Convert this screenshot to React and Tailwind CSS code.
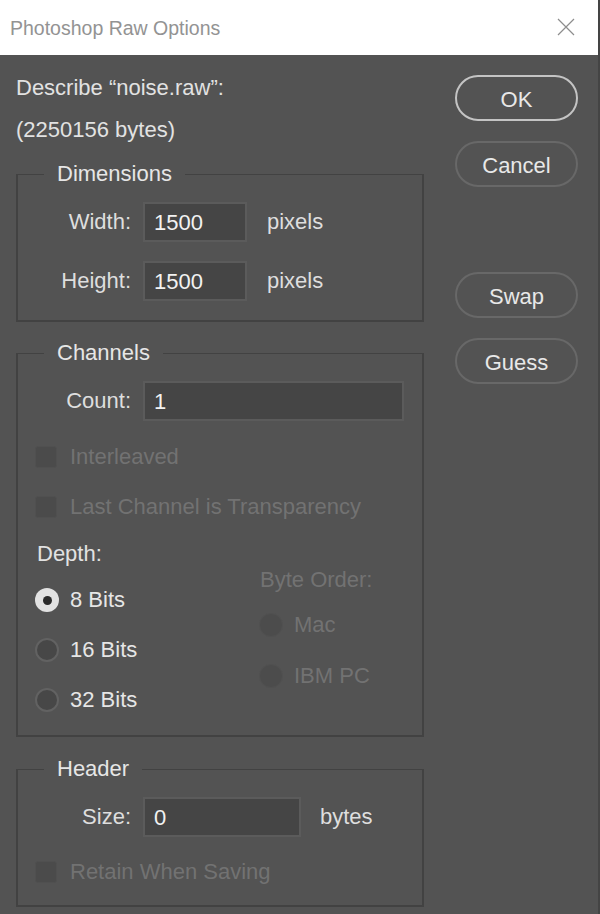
import React from "react";

const font = { fontFamily: '"Liberation Sans", Arial, sans-serif' };

const Field = ({ label, value, labelW, inputW }) => (
  <div className="flex items-center h-[40px]">
    <span className={`${labelW} text-right text-[#dedede]`}>{label}</span>
    <div
      className={`${inputW} ml-[12px] h-[40px] bg-[#454545] border-2 border-[#5b5b5b] flex items-center pl-[9px] pt-[1px] text-[#f2f2f2]`}
    >
      {value}
    </div>
  </div>
);

const Check = ({ label }) => (
  <div className="flex items-center h-[30px]">
    <div className="w-[22px] h-[22px] rounded-[3px] bg-[#4b4b4b] border border-[#505050]" />
    <span className="ml-[13px] text-[#727272]">{label}</span>
  </div>
);

const Radio = ({ label, checked, disabled }) => (
  <div className="flex items-center h-[30px]">
    {checked ? (
      <div className="w-[24px] h-[24px] rounded-full bg-[#e2e2e2] flex items-center justify-center">
        <div className="w-[9px] h-[9px] rounded-full bg-[#2b2b2b]" />
      </div>
    ) : disabled ? (
      <div className="w-[24px] h-[24px] rounded-full bg-[#4c4c4c] border border-[#515151]" />
    ) : (
      <div className="w-[24px] h-[24px] rounded-full bg-[#474747] border-2 border-[#626262]" />
    )}
    <span className={`ml-[11px] ${disabled ? "text-[#727272]" : "text-[#e6e6e6]"}`}>{label}</span>
  </div>
);

const Group = ({ title, children, className }) => (
  <div className={`relative border-2 border-t border-[#424242] ${className}`}>
    <span className="absolute -top-[15px] left-[26px] px-[13px] bg-[#535353] leading-[28px] text-[#e6e6e6]">
      {title}
    </span>
    {children}
  </div>
);

const Button = ({ children, primary, className = "" }) => (
  <div
    className={`w-[123px] h-[46px] rounded-full flex items-center justify-center pt-[3px] text-[#e8e8e8] ${
      primary ? "border-2 border-[#c4c4c4]" : "border-2 border-[#686868]"
    } ${className}`}
  >
    {children}
  </div>
);

export default function App() {
  return (
    <div
      style={font}
      className="w-[600px] h-[914px] bg-[#535353] border-r-2 border-[#444444] overflow-hidden flex flex-col text-[22px] leading-[28px]"
    >
      {/* Title bar */}
      <div className="h-[55px] bg-white flex items-center justify-between pl-[10px] pr-[23px] shrink-0">
        <span className="text-[19.5px] text-[#939393]">Photoshop Raw Options</span>
        <svg width="18" height="18" viewBox="0 0 18 18" className="-mt-[2px]">
          <path d="M1 1 L17 17 M17 1 L1 17" stroke="#8d8d8d" strokeWidth="1.2" fill="none" />
        </svg>
      </div>

      <div className="flex">
        {/* Left column */}
        <div className="w-[424px] pl-[16px] flex flex-col">
          <div className="mt-[19px] text-[#e2e2e2]">Describe “noise.raw”:</div>
          <div className="mt-[14px] text-[#e2e2e2]">(2250156 bytes)</div>

          <Group title="Dimensions" className="mt-[30px] pt-[27px] pb-[19px]">
            <div className="flex items-center">
              <Field label="Width:" value="1500" labelW="w-[113px]" inputW="w-[104px]" />
              <span className="ml-[20px] text-[#dedede]">pixels</span>
            </div>
            <div className="flex items-center mt-[19px]">
              <Field label="Height:" value="1500" labelW="w-[113px]" inputW="w-[104px]" />
              <span className="ml-[20px] text-[#dedede]">pixels</span>
            </div>
          </Group>

          <Group title="Channels" className="mt-[31px] pt-[27px] pb-[20px]">
            <Field label="Count:" value="1" labelW="w-[113px]" inputW="w-[261px]" />
            <div className="pl-[17px]">
              <div className="mt-[21px]">
                <Check label="Interleaved" />
              </div>
              <div className="mt-[20px]">
                <Check label="Last Channel is Transparency" />
              </div>
              <div className="flex mt-[18px]">
                <div className="w-[224px] flex flex-col">
                  <div className="pl-[2px] text-[#e2e2e2]">Depth:</div>
                  <div className="mt-[17px]">
                    <Radio label="8 Bits" checked />
                  </div>
                  <div className="mt-[20px]">
                    <Radio label="16 Bits" />
                  </div>
                  <div className="mt-[20px]">
                    <Radio label="32 Bits" />
                  </div>
                </div>
                <div className="flex flex-col pt-[26px]">
                  <div className="pl-[1px] text-[#727272]">Byte Order:</div>
                  <div className="mt-[16px]">
                    <Radio label="Mac" disabled />
                  </div>
                  <div className="mt-[21px]">
                    <Radio label="IBM PC" disabled />
                  </div>
                </div>
              </div>
            </div>
          </Group>

          <Group title="Header" className="mt-[32px] pt-[27px] pb-[18px]">
            <div className="flex items-center">
              <Field label="Size:" value="0" labelW="w-[113px]" inputW="w-[158px]" />
              <span className="ml-[19px] text-[#dedede]">bytes</span>
            </div>
            <div className="pl-[17px] mt-[20px]">
              <Check label="Retain When Saving" />
            </div>
          </Group>
        </div>

        {/* Right column */}
        <div className="ml-[31px] pt-[20px] flex flex-col">
          <Button primary>OK</Button>
          <Button className="mt-[20px]">Cancel</Button>
          <Button className="mt-[85px]">Swap</Button>
          <Button className="mt-[20px]">Guess</Button>
        </div>
      </div>
    </div>
  );
}
